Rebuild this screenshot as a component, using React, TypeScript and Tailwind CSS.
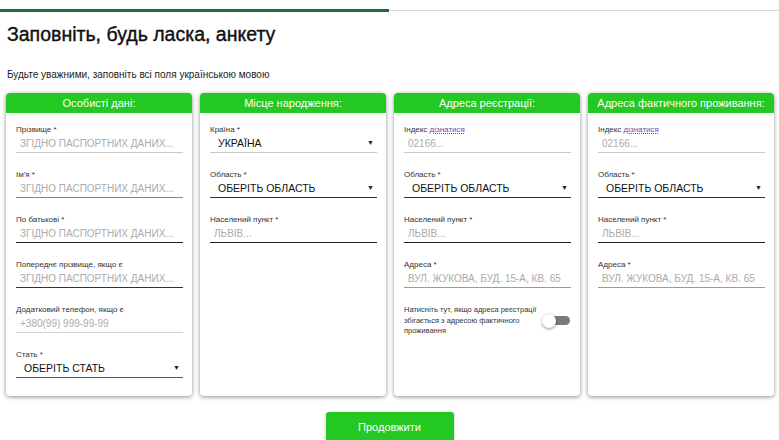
import React from "react";

type Field = {
  label: string;
  value: string;
  select?: boolean;
  link?: string;
  line: string;
};

const passport = "ЗГІДНО ПАСПОРТНИХ ДАНИХ...";

const cards: { title: string; fields: Field[]; toggle?: boolean }[] = [
  {
    title: "Особисті дані:",
    fields: [
      { label: "Прізвище *", value: passport, line: "border-[#c8c8c8]" },
      { label: "Ім'я *", value: passport, line: "border-[#8a8a8a]" },
      { label: "По батькові *", value: passport, line: "border-[#222]" },
      { label: "Попереднє прізвище, якщо є", value: passport, line: "border-[#333]" },
      { label: "Додатковий телефон, якщо є", value: "+380(99) 999-99-99", line: "border-[#d4d4d4]" },
      { label: "Стать *", value: "ОБЕРІТЬ СТАТЬ", select: true, line: "border-[#555]" },
    ],
  },
  {
    title: "Місце народження:",
    fields: [
      { label: "Країна *", value: "УКРАЇНА", select: true, line: "border-[#c8c8c8]" },
      { label: "Область *", value: "ОБЕРІТЬ ОБЛАСТЬ", select: true, line: "border-[#333]" },
      { label: "Населений пункт *", value: "ЛЬВІВ...", line: "border-[#222]" },
    ],
  },
  {
    title: "Адреса реєстрації:",
    fields: [
      { label: "Індекс ", link: "дізнатися", value: "02166...", line: "border-[#c8c8c8]" },
      { label: "Область *", value: "ОБЕРІТЬ ОБЛАСТЬ", select: true, line: "border-[#333]" },
      { label: "Населений пункт *", value: "ЛЬВІВ...", line: "border-[#222]" },
      { label: "Адреса *", value: "ВУЛ. ЖУКОВА, БУД. 15-А, КВ. 65", line: "border-[#9a9a9a]" },
    ],
    toggle: true,
  },
  {
    title: "Адреса фактичного проживання:",
    fields: [
      { label: "Індекс ", link: "дізнатися", value: "02166...", line: "border-[#c8c8c8]" },
      { label: "Область *", value: "ОБЕРІТЬ ОБЛАСТЬ", select: true, line: "border-[#333]" },
      { label: "Населений пункт *", value: "ЛЬВІВ...", line: "border-[#222]" },
      { label: "Адреса *", value: "ВУЛ. ЖУКОВА, БУД. 15-А, КВ. 65", line: "border-[#9a9a9a]" },
    ],
  },
];

const FieldRow = ({ f }: { f: Field }) => (
  <div className="mb-[17px]">
    <div className="h-[10px] leading-[10px] text-[8px] text-[#333] whitespace-nowrap">
      {f.label}
      {f.link && <span className="text-[#5b4fa8] underline decoration-dotted">{f.link}</span>}
    </div>
    <div className={`h-[18px] border-b flex items-center ${f.line}`}>
      {f.select ? (
        <>
          <span className="pl-[8px] flex-1 text-[10.5px] text-[#111] whitespace-nowrap">{f.value}</span>
          <span className="text-[7px] text-[#222] pr-[3px]">▼</span>
        </>
      ) : (
        <span className="pl-[4px] text-[10px] text-[#ababab] whitespace-nowrap">{f.value}</span>
      )}
    </div>
  </div>
);

export default function App() {
  return (
    <div className="w-[779px] h-[440px] overflow-hidden bg-white font-['Liberation_Sans',Arial,sans-serif]">
      <div className="pt-[9px] flex items-center">
        <div className="w-[389px] h-[3px] bg-[#1f6b3b]" />
        <div className="flex-1 h-px bg-[#d6d6d6]" />
      </div>
      <h1 className="mt-[10px] ml-[7px] h-[24px] leading-[24px] text-[19.5px] text-[#111] [-webkit-text-stroke:0.4px_#111]">
        Заповніть, будь ласка, анкету
      </h1>
      <p className="mt-[23px] ml-[7px] h-[12px] leading-[12px] text-[10px] text-[#222]">
        Будьте уважними, заповніть всі поля українською мовою
      </p>
      <div className="mt-[12px] pl-[6px] pr-[5px] grid grid-cols-4 gap-[8px] h-[303px]">
        {cards.map((c) => (
          <div key={c.title} className="rounded-[4px] bg-white shadow-[0_1px_4px_rgba(0,0,0,0.45)] overflow-hidden flex flex-col">
            <div className="h-[20px] bg-[#23c823] text-white text-[11px] leading-[20px] text-center whitespace-nowrap">
              {c.title}
            </div>
            <div className="pt-[12px] pl-[10px] pr-[9px]">
              {c.fields.map((f) => (
                <FieldRow key={f.label + f.value} f={f} />
              ))}
              {c.toggle && (
                <div className="flex items-center mt-[2px]">
                  <p className="flex-1 text-[7.5px] leading-[10.5px] text-[#333] pr-[2px]">
                    Натисніть тут, якщо адреса реєстрації збігається з адресою фактичного проживання
                  </p>
                  <div className="relative w-[28px] h-[14px] mr-[1px] flex items-center">
                    <div className="w-[22px] h-[9px] ml-[6px] rounded-full bg-[#7a7a7a]" />
                    <div className="absolute left-0 top-0 w-[14px] h-[14px] rounded-full bg-white shadow-[0_1px_3px_rgba(0,0,0,0.45)]" />
                  </div>
                </div>
              )}
            </div>
          </div>
        ))}
      </div>
      <div className="mt-[16px] flex justify-center">
        <button className="w-[128px] h-[30px] rounded-[3px] bg-[#23c823] text-white text-[11px] shadow-[0_1px_3px_rgba(0,0,0,0.3)]">
          Продовжити
        </button>
      </div>
    </div>
  );
}
